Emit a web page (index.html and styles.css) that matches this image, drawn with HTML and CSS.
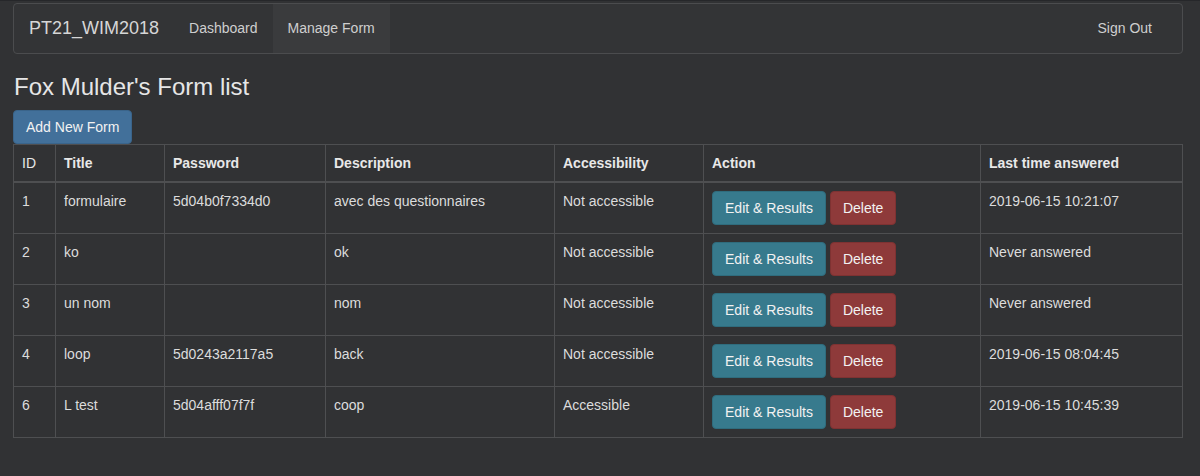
FILE: index.html
```html
<!DOCTYPE html>
<html>
<head>
<meta charset="utf-8">
<link rel="stylesheet" href="styles.css">
</head>
<body>
<div class="page">
  <nav class="navbar">
    <div class="nav-left">
      <span class="brand">PT21_WIM2018</span>
      <a class="nav-link">Dashboard</a>
      <a class="nav-link active">Manage Form</a>
    </div>
    <a class="nav-link">Sign Out</a>
  </nav>
  <h3 class="title">Fox Mulder's Form list</h3>
  <button class="btn btn-primary">Add New Form</button>
  <table class="forms">
    <colgroup>
      <col class="c-id"><col class="c-title"><col class="c-pass"><col class="c-desc"><col class="c-acc"><col class="c-act"><col class="c-last">
    </colgroup>
    <thead>
      <tr><th class="th-id">ID</th><th>Title</th><th>Password</th><th>Description</th><th>Accessibility</th><th>Action</th><th>Last time answered</th></tr>
    </thead>
    <tbody>
      <tr><td>1</td><td>formulaire</td><td>5d04b0f7334d0</td><td>avec des questionnaires</td><td>Not accessible</td><td><button class="btn btn-info">Edit &amp; Results</button> <button class="btn btn-danger">Delete</button></td><td>2019-06-15 10:21:07</td></tr>
      <tr><td>2</td><td>ko</td><td></td><td>ok</td><td>Not accessible</td><td><button class="btn btn-info">Edit &amp; Results</button> <button class="btn btn-danger">Delete</button></td><td>Never answered</td></tr>
      <tr><td>3</td><td>un nom</td><td></td><td>nom</td><td>Not accessible</td><td><button class="btn btn-info">Edit &amp; Results</button> <button class="btn btn-danger">Delete</button></td><td>Never answered</td></tr>
      <tr><td>4</td><td>loop</td><td>5d0243a2117a5</td><td>back</td><td>Not accessible</td><td><button class="btn btn-info">Edit &amp; Results</button> <button class="btn btn-danger">Delete</button></td><td>2019-06-15 08:04:45</td></tr>
      <tr><td>6</td><td>L test</td><td>5d04afff07f7f</td><td>coop</td><td>Accessible</td><td><button class="btn btn-info">Edit &amp; Results</button> <button class="btn btn-danger">Delete</button></td><td>2019-06-15 10:45:39</td></tr>
    </tbody>
  </table>
</div>
</body>
</html>
```

FILE: styles.css
```css
html, body {
  margin: 0;
  padding: 0;
  background: #313234;
}
body {
  font-family: "Liberation Sans", Arial, sans-serif;
  font-size: 14px;
  line-height: 20px;
  color: #dcdcdc;
  border-top: 1px solid #26272a;
}
.page {
  width: 1170px;
  margin-left: 13px;
  padding-top: 2px;
}
.navbar {
  box-sizing: border-box;
  height: 51px;
  border: 1px solid #4b4c4e;
  border-radius: 4px;
  background: #333436;
  display: flex;
  justify-content: space-between;
  align-items: stretch;
  padding: 0 15px;
  margin-bottom: 20px;
}
.nav-left {
  display: flex;
  align-items: stretch;
}
.brand {
  font-size: 18px;
  color: #d6d6d6;
  line-height: 49px;
  padding-right: 15px;
}
.nav-link {
  display: block;
  padding: 0 15px;
  line-height: 49px;
  color: #cfcfcf;
  text-decoration: none;
}
.nav-link.active {
  background: #3a3b3d;
}
.title {
  margin: 0 0 10px 1px;
  font-size: 24px;
  font-weight: normal;
  line-height: 26px;
  color: #e6e6e6;
}
.btn {
  box-sizing: border-box;
  height: 34px;
  padding: 0 12px;
  font-family: "Liberation Sans", Arial, sans-serif;
  font-size: 14px;
  line-height: 32px;
  color: #f2f2f2;
  border: 1px solid transparent;
  border-radius: 4px;
  cursor: pointer;
  vertical-align: middle;
  white-space: nowrap;
}
.btn-primary {
  background: #42709a;
  border-color: #3a648a;
  display: block;
}
.btn-info {
  background: #377a8d;
  border-color: #2f6c7d;
  width: 114px;
}
.btn-danger {
  background: #8e3a3a;
  border-color: #7e3232;
  width: 66px;
}
.forms {
  width: 1170px;
  table-layout: fixed;
  border-collapse: collapse;
  border: 1px solid #4e4f51;
  margin-top: 0;
}
.c-id { width: 42px; }
.c-title { width: 109px; }
.c-pass { width: 161px; }
.c-desc { width: 229px; }
.c-acc { width: 149px; }
.c-act { width: 277px; }
.c-last { width: 202px; }
.forms th, .forms td {
  border: 1px solid #4e4f51;
  padding: 8px;
  text-align: left;
  vertical-align: top;
  line-height: 20px;
}
.forms th {
  font-weight: bold;
  color: #e8e8e8;
  border-bottom: 2px solid #4e4f51;
  height: 20px;
}
.forms th.th-id {
  font-weight: normal;
}
.forms td {
  height: 34px;
  color: #dcdcdc;
}
```
